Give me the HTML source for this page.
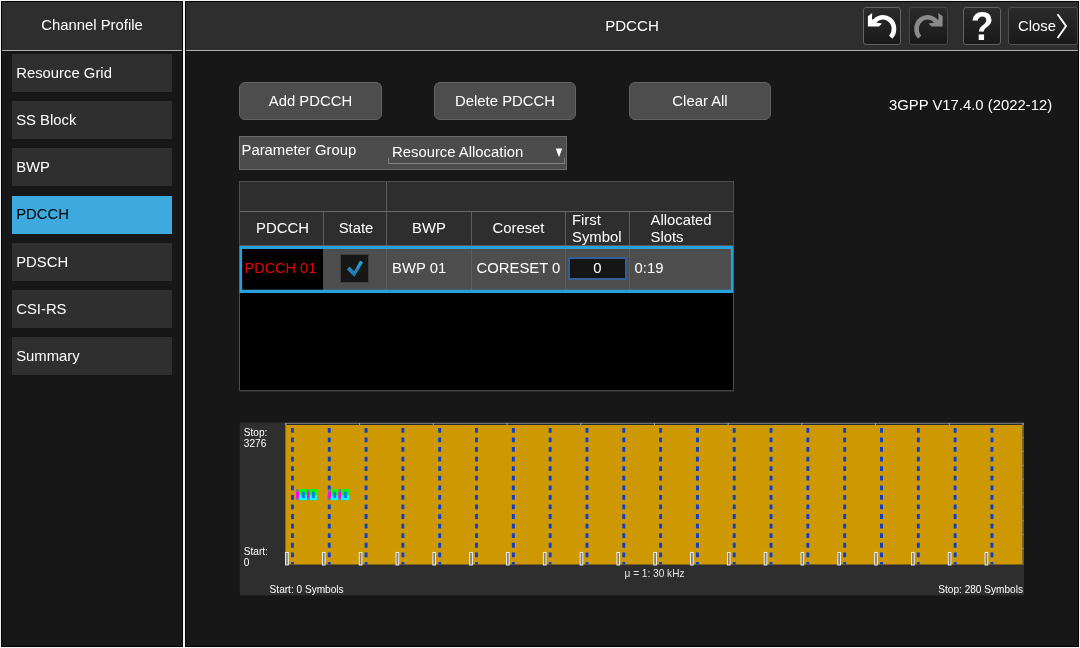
<!DOCTYPE html>
<html><head><meta charset="utf-8"><title>PDCCH</title>
<style>
*{box-sizing:border-box;margin:0;padding:0}
html,body{width:1080px;height:648px;overflow:hidden;background:#f0f0f0}
body{position:relative;font-family:"Liberation Sans",Arial,sans-serif;font-size:14.85px;color:#fff}
.abs{position:absolute;white-space:nowrap}
.panel{position:absolute;top:0;height:648px;background:#171717;border:1px solid #000;outline:1px solid #f0f0f0;outline-offset:0}
.hdr{position:absolute;top:2px;height:48px;background:#2e2e2e}
.hline{position:absolute;top:50px;height:1px;background:#b2b2b2}
.item{position:absolute;left:12px;width:160px;height:38px;background:#2f2f2f;padding-left:4.2px;line-height:36.4px;white-space:nowrap}
.item.act{background:#3ea9dc;color:#000}
.btn{position:absolute;top:82px;height:38px;background:#4d4d4d;border:1px solid #636363;border-radius:6px;text-align:center;line-height:37.4px;white-space:nowrap}
.tb{position:absolute;top:7px;width:38px;height:38px;border:1px solid #626262;border-radius:3px;background:linear-gradient(#2b2b2b,#191919)}
.tb svg{position:absolute;left:-1px;top:-1px}
.vl{width:1px;background:#5e5e5e}
.hl{height:1px;background:#6a6a6a}
.th{top:212px;height:33px;line-height:33px;text-align:center}
.td{top:249px;height:41px;line-height:39.5px}
#root{position:absolute;left:0;top:0;width:1080px;height:648px;will-change:transform}
</style></head><body><div id="root">
<!-- panels -->
<div class="panel" style="left:1px;top:1px;width:182px;height:646px"></div>
<div class="panel" style="left:185px;top:1px;width:894px;height:646px"></div>
<div class="hdr" style="left:2px;width:180px"></div><div class="hline" style="left:2px;width:180px"></div>
<div class="hdr" style="left:186px;width:892px"></div><div class="hline" style="left:186px;width:892px"></div>

<div class="abs" style="left:2px;width:180px;top:51px;height:1px;background:#111"></div><div class="abs" style="left:186px;width:892px;top:51px;height:1px;background:#111"></div>
<!-- sidebar -->
<div class="abs" style="left:2px;width:180px;top:2px;height:48px;line-height:47.8px;text-align:center">Channel Profile</div>
<div class="item" style="top:54px;line-height:38.4px">Resource Grid</div>
<div class="item" style="top:101px;line-height:38.4px">SS Block</div>
<div class="item" style="top:148px;line-height:38.4px">BWP</div>
<div class="item act" style="top:196px">PDCCH</div>
<div class="item" style="top:243px;line-height:38.4px">PDSCH</div>
<div class="item" style="top:290px;line-height:38.4px">CSI-RS</div>
<div class="item" style="top:337px;line-height:38.4px">Summary</div>

<!-- title bar -->
<div class="abs" style="left:186px;width:892px;top:2px;height:48px;line-height:47.6px;font-size:15.1px;text-align:center">PDCCH</div>
<div class="tb" style="left:863px"><svg width="38" height="38" viewBox="0 0 38 38"><path d="M10.47 16.10 A11.0 11.8 0 1 1 27.81 30.31" fill="none" stroke="#fff" stroke-width="4.6"/><polygon points="9.22,5.89 4.89,9.33 4.89,19.61 16,19.61 19.06,16.44 12.2,15.5 8.89,11.83" fill="#fff"/></svg></div>
<div class="tb" style="left:909px;width:38.6px;border-color:#464646"><svg width="38" height="38" viewBox="0 0 38 38"><g transform="translate(38.5,0) scale(-1,1)"><path d="M10.47 16.10 A11.0 11.8 0 1 1 27.81 30.31" fill="none" stroke="#8a8a8a" stroke-width="4.6"/><polygon points="9.22,5.89 4.89,9.33 4.89,19.61 16,19.61 19.06,16.44 12.2,15.5 8.89,11.83" fill="#8a8a8a"/></g></svg></div>
<div class="tb" style="left:963px"><div class="abs" style="left:0;width:36px;top:0;text-align:center;font-weight:bold;font-size:39px;line-height:38px;transform:scale(0.96,1.06);transform-origin:55% 82%">?</div></div>
<div class="tb" style="left:1008px;width:70px;border-color:#4e4e4e"><div class="abs" style="left:9px;top:0;line-height:36px">Close</div><svg width="70" height="38" viewBox="0 0 70 38"><path d="M49.6 7.2 L58.06 19.1 L49.6 31" fill="none" stroke="#fff" stroke-width="1.9"/></svg></div>

<!-- action buttons -->
<div class="btn" style="left:239px;width:143px">Add PDCCH</div>
<div class="btn" style="left:434px;width:142px">Delete PDCCH</div>
<div class="btn" style="left:629px;width:142px">Clear All</div>
<div class="abs" style="left:889px;top:95.5px;line-height:18px;font-size:14.85px">3GPP V17.4.0 (2022-12)</div>

<!-- parameter group -->
<div class="abs" style="left:239px;top:136px;width:328px;height:34px;background:#4c4c4c;border:1px solid #6a6a6a"></div>
<div class="abs" style="left:241.5px;top:141px;line-height:18px">Parameter Group</div>
<div class="abs" style="left:392px;top:142.5px;line-height:18px">Resource Allocation</div>
<div class="abs" style="left:388px;top:158px;width:177px;height:6px;border:1px solid #828282;border-top:none"></div>
<svg class="abs" style="left:555px;top:148px" width="8" height="10" viewBox="0 0 8 10"><polygon points="0.8,0.5 7.2,0.5 4,9.2" fill="#fff"/></svg>

<!-- table -->
<div class="abs" style="left:239px;top:181px;width:495px;height:210px;background:#000;border:1px solid #4c4c4c;border-bottom-color:#404040"></div><div class="abs" style="left:239px;top:391px;width:495px;height:1px;background:#2a2a2a"></div>
<div class="abs" style="left:240px;top:182px;width:493px;height:64px;background:#2e2e2e"></div>
<div class="abs vl" style="left:386px;top:182px;height:64px"></div>
<div class="abs hl" style="left:240px;top:211px;width:493px"></div>
<div class="abs hl" style="left:240px;top:245px;width:493px;background:#5a5a5a"></div>
<div class="abs vl" style="left:323px;top:212px;height:34px"></div>
<div class="abs vl" style="left:471px;top:212px;height:34px"></div>
<div class="abs vl" style="left:565px;top:212px;height:34px"></div>
<div class="abs vl" style="left:629px;top:212px;height:34px"></div>
<div class="abs th" style="left:241px;width:83px">PDCCH</div>
<div class="abs th" style="left:325px;width:62px">State</div>
<div class="abs th" style="left:387px;width:84px">BWP</div>
<div class="abs th" style="left:472px;width:93px">Coreset</div>
<div class="abs" style="left:572px;top:212px;line-height:16.6px">First<br>Symbol</div>
<div class="abs" style="left:650.5px;top:212px;line-height:16.6px">Allocated<br>Slots</div>
<!-- data row -->
<div class="abs" style="left:240px;top:246px;width:493px;height:47px;background:#4d4d4d"></div>
<div class="abs" style="left:242px;top:249px;width:81px;height:41px;background:#000"></div>
<div class="abs vl" style="left:386px;top:249px;height:41px;background:#5c5c5c"></div>
<div class="abs vl" style="left:471px;top:249px;height:41px;background:#5c5c5c"></div>
<div class="abs vl" style="left:565px;top:249px;height:41px;background:#5c5c5c"></div>
<div class="abs vl" style="left:629px;top:249px;height:41px;background:#5c5c5c"></div>
<div class="abs td" style="left:244.5px;color:#e80000;font-size:14.5px">PDCCH 01</div>
<div class="abs" style="left:340px;top:254px;width:29px;height:29px;background:#161616;border:1px solid #414141"></div>
<svg class="abs" style="left:340px;top:254px" width="30" height="30" viewBox="340 254 30 30"><defs><linearGradient id="ck" x1="0" y1="0" x2="0" y2="1"><stop offset="0" stop-color="#2ba4dc"/><stop offset="1" stop-color="#1a739f"/></linearGradient></defs><polygon points="346.9,269.4 349.5,266.4 354.1,271.3 360,260.6 363,262.6 354.4,277.1" fill="url(#ck)"/></svg>
<svg class="abs" style="left:236px;top:242px" width="504" height="56" viewBox="236 242 504 56"><path fill-rule="evenodd" fill="#29a0da" d="M239.5 245.9H733.3V293.07H239.5Z M242.1 249.07V289.7H730.9V249.07Z"/></svg>
<div class="abs td" style="left:392px">BWP 01</div>
<div class="abs td" style="left:476.5px">CORESET 0</div>
<div class="abs" style="left:568px;top:256.6px;width:59px;height:23.4px;background:#151515;border:2px solid #345f96"></div>
<div class="abs td" style="left:568px;width:59px;text-align:center">0</div>
<div class="abs td" style="left:634.5px">0:19</div>

<!--CHART_START-->
<!-- chart -->
<svg class="abs" style="left:0;top:0" width="1080" height="648" viewBox="0 0 1080 648" font-family="Liberation Sans, Arial, sans-serif" font-size="10.1" fill="#fff">
<rect x="239.8" y="422.5" width="784.2" height="172.9" fill="#2e2e2e"/>
<rect x="285" y="422.8" width="738.7" height="1.3" fill="#6c6c6c"/>
<rect x="285" y="424" width="738" height="1" fill="#2a2a30"/>
<rect x="285" y="423" width="1" height="142" fill="#6c6c6c"/>
<rect x="1022.3" y="423" width="1.4" height="142" fill="#6c6c6c"/>
<rect x="286" y="425" width="736.3" height="139.5" fill="#ce9803"/>
<rect x="285.4" y="423" width="1" height="2.2" fill="#a4a4a4"/>
<rect x="359.11" y="423" width="1" height="2.2" fill="#a4a4a4"/>
<rect x="432.82" y="423" width="1" height="2.2" fill="#a4a4a4"/>
<rect x="506.53" y="423" width="1" height="2.2" fill="#a4a4a4"/>
<rect x="580.24" y="423" width="1" height="2.2" fill="#a4a4a4"/>
<rect x="653.95" y="423" width="1" height="2.2" fill="#a4a4a4"/>
<rect x="727.66" y="423" width="1" height="2.2" fill="#a4a4a4"/>
<rect x="801.37" y="423" width="1" height="2.2" fill="#a4a4a4"/>
<rect x="875.08" y="423" width="1" height="2.2" fill="#a4a4a4"/>
<rect x="948.79" y="423" width="1" height="2.2" fill="#a4a4a4"/>
<rect x="1022.5" y="423" width="1" height="2.2" fill="#a4a4a4"/>
<rect x="1021.6" y="437.07" width="2" height="1" fill="#949494"/>
<rect x="1021.6" y="450.94" width="2" height="1" fill="#949494"/>
<rect x="1021.6" y="464.81" width="2" height="1" fill="#949494"/>
<rect x="1021.6" y="478.68" width="2" height="1" fill="#949494"/>
<rect x="1021.6" y="492.55" width="2" height="1" fill="#949494"/>
<rect x="1021.6" y="506.42" width="2" height="1" fill="#949494"/>
<rect x="1021.6" y="520.29" width="2" height="1" fill="#949494"/>
<rect x="1021.6" y="534.16" width="2" height="1" fill="#949494"/>
<rect x="1021.6" y="548.03" width="2" height="1" fill="#949494"/>
<path d="M292.45 427.9V564.5M329.26 427.9V564.5M366.08 427.9V564.5M402.89 427.9V564.5M439.71 427.9V564.5M476.52 427.9V564.5M513.34 427.9V564.5M550.15 427.9V564.5M586.97 427.9V564.5M623.78 427.9V564.5M660.6 427.9V564.5M697.41 427.9V564.5M734.23 427.9V564.5M771.04 427.9V564.5M807.86 427.9V564.5M844.67 427.9V564.5M881.49 427.9V564.5M918.31 427.9V564.5M955.12 427.9V564.5M991.93 427.9V564.5" stroke="#0a3fd2" stroke-width="2.9" stroke-dasharray="4.8 4.78" fill="none"/>
<rect x="296" y="489.1" width="3.33" height="11.1" fill="#808080"/><rect x="296" y="491.7" width="3.33" height="6.3" fill="#ff00ff"/><rect x="299.33" y="489.1" width="7.77" height="6.3" fill="#00ff00"/><rect x="299.33" y="495.3" width="7.77" height="4.9" fill="#00ffff"/><rect x="301.9" y="491.7" width="3" height="6.3" fill="#0a7fe6"/>
<rect x="307.1" y="489.1" width="2.6" height="11.1" fill="#808080"/><rect x="307.1" y="491.7" width="2.6" height="6.3" fill="#ff00ff"/><rect x="309.7" y="489.1" width="7.4" height="6.3" fill="#00ff00"/><rect x="309.7" y="495.3" width="7.4" height="4.9" fill="#00ffff"/><rect x="312" y="491.7" width="2.9" height="6.3" fill="#0a7fe6"/>
<rect x="328.2" y="489.1" width="2.8" height="11.1" fill="#808080"/><rect x="328.2" y="491.7" width="2.8" height="6.3" fill="#ff00ff"/><rect x="331" y="489.1" width="7.5" height="6.3" fill="#00ff00"/><rect x="331" y="495.3" width="7.5" height="4.9" fill="#00ffff"/><rect x="333.4" y="491.7" width="2.7" height="6.3" fill="#0a7fe6"/>
<rect x="338.5" y="489.1" width="2.7" height="11.1" fill="#808080"/><rect x="338.5" y="491.7" width="2.7" height="6.3" fill="#ff00ff"/><rect x="341.2" y="489.1" width="8.1" height="6.3" fill="#00ff00"/><rect x="341.2" y="495.3" width="8.1" height="4.9" fill="#00ffff"/><rect x="343.8" y="491.7" width="3.1" height="6.3" fill="#0a7fe6"/>
<rect x="285.6" y="552.4" width="2.7" height="12.6" fill="#808080" stroke="#f4f4f4" stroke-width="0.9"/>
<rect x="322.42" y="552.4" width="2.7" height="12.6" fill="#808080" stroke="#f4f4f4" stroke-width="0.9"/>
<rect x="359.23" y="552.4" width="2.7" height="12.6" fill="#808080" stroke="#f4f4f4" stroke-width="0.9"/>
<rect x="396.05" y="552.4" width="2.7" height="12.6" fill="#808080" stroke="#f4f4f4" stroke-width="0.9"/>
<rect x="432.86" y="552.4" width="2.7" height="12.6" fill="#808080" stroke="#f4f4f4" stroke-width="0.9"/>
<rect x="469.68" y="552.4" width="2.7" height="12.6" fill="#808080" stroke="#f4f4f4" stroke-width="0.9"/>
<rect x="506.49" y="552.4" width="2.7" height="12.6" fill="#808080" stroke="#f4f4f4" stroke-width="0.9"/>
<rect x="543.31" y="552.4" width="2.7" height="12.6" fill="#808080" stroke="#f4f4f4" stroke-width="0.9"/>
<rect x="580.12" y="552.4" width="2.7" height="12.6" fill="#808080" stroke="#f4f4f4" stroke-width="0.9"/>
<rect x="616.93" y="552.4" width="2.7" height="12.6" fill="#808080" stroke="#f4f4f4" stroke-width="0.9"/>
<rect x="653.75" y="552.4" width="2.7" height="12.6" fill="#808080" stroke="#f4f4f4" stroke-width="0.9"/>
<rect x="690.57" y="552.4" width="2.7" height="12.6" fill="#808080" stroke="#f4f4f4" stroke-width="0.9"/>
<rect x="727.38" y="552.4" width="2.7" height="12.6" fill="#808080" stroke="#f4f4f4" stroke-width="0.9"/>
<rect x="764.19" y="552.4" width="2.7" height="12.6" fill="#808080" stroke="#f4f4f4" stroke-width="0.9"/>
<rect x="801.01" y="552.4" width="2.7" height="12.6" fill="#808080" stroke="#f4f4f4" stroke-width="0.9"/>
<rect x="837.82" y="552.4" width="2.7" height="12.6" fill="#808080" stroke="#f4f4f4" stroke-width="0.9"/>
<rect x="874.64" y="552.4" width="2.7" height="12.6" fill="#808080" stroke="#f4f4f4" stroke-width="0.9"/>
<rect x="911.46" y="552.4" width="2.7" height="12.6" fill="#808080" stroke="#f4f4f4" stroke-width="0.9"/>
<rect x="948.27" y="552.4" width="2.7" height="12.6" fill="#808080" stroke="#f4f4f4" stroke-width="0.9"/>
<rect x="985.08" y="552.4" width="2.7" height="12.6" fill="#808080" stroke="#f4f4f4" stroke-width="0.9"/>
<text x="243.8" y="436">Stop:</text><text x="243.8" y="447.4">3276</text>
<text x="243.8" y="554.5">Start:</text><text x="243.8" y="566.4">0</text>
<text x="269.6" y="592.9">Start: 0 Symbols</text>
<text x="1023" y="592.9" text-anchor="end">Stop: 280 Symbols</text>
<text x="654.5" y="577.3" text-anchor="middle" fill="#e6e6e6">μ = 1: 30 kHz</text>
</svg>
<!--CHART_END-->
</div></body></html>
